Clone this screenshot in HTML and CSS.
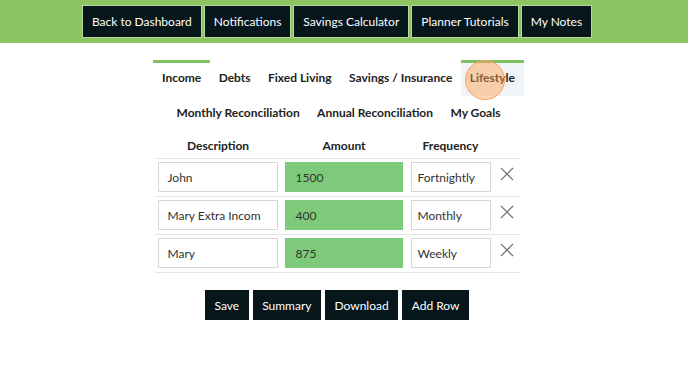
FILE: index.html
```html
<!DOCTYPE html>
<html>
<head>
<meta charset="utf-8">
<link rel="stylesheet" href="styles.css">
</head>
<body>
<header class="topbar">
  <nav class="topnav">
    <a class="navbtn">Back to Dashboard</a>
    <a class="navbtn">Notifications</a>
    <a class="navbtn">Savings Calculator</a>
    <a class="navbtn">Planner Tutorials</a>
    <a class="navbtn">My Notes</a>
  </nav>
</header>
<main class="main">
  <div class="tabs">
    <div class="tabrow">
      <span class="tab active">Income</span>
      <span class="tab">Debts</span>
      <span class="tab">Fixed Living</span>
      <span class="tab">Savings / Insurance</span>
      <span class="tab active hover">Lifestyle<span class="cursor"></span></span>
    </div>
    <div class="tabrow">
      <span class="tab">Monthly Reconciliation</span>
      <span class="tab">Annual Reconciliation</span>
      <span class="tab">My Goals</span>
    </div>
  </div>
  <table class="grid">
    <colgroup><col class="c-desc"><col class="c-amt"><col class="c-freq"><col class="c-x"></colgroup>
    <thead>
      <tr><th>Description</th><th>Amount</th><th>Frequency</th><th></th></tr>
    </thead>
    <tbody>
      <tr>
        <td class="t-desc"><div class="field desc">John</div></td>
        <td class="t-amt"><div class="field amt">1500</div></td>
        <td class="t-freq"><div class="field freq">Fortnightly</div></td>
        <td class="t-x"><svg class="xicon" viewBox="0 0 16 16"><path d="M1 1L15 15M15 1L1 15"/></svg></td>
      </tr>
      <tr>
        <td class="t-desc"><div class="field desc">Mary Extra Incom</div></td>
        <td class="t-amt"><div class="field amt">400</div></td>
        <td class="t-freq"><div class="field freq">Monthly</div></td>
        <td class="t-x"><svg class="xicon" viewBox="0 0 16 16"><path d="M1 1L15 15M15 1L1 15"/></svg></td>
      </tr>
      <tr>
        <td class="t-desc"><div class="field desc">Mary</div></td>
        <td class="t-amt"><div class="field amt">875</div></td>
        <td class="t-freq"><div class="field freq">Weekly</div></td>
        <td class="t-x"><svg class="xicon" viewBox="0 0 16 16"><path d="M1 1L15 15M15 1L1 15"/></svg></td>
      </tr>
    </tbody>
  </table>
  <div class="actions">
    <a class="btn">Save</a>
    <a class="btn">Summary</a>
    <a class="btn">Download</a>
    <a class="btn">Add Row</a>
  </div>
</main>
</body>
</html>
```
FILE: styles.css
```css
html, body { margin: 0; padding: 0; background: #fff; }
body { font-family: Lato, "Open Sans", Arial, sans-serif; color: #222; }
.topbar { background: #8cc462; height: 43px; display: flex; justify-content: center; padding-right: 14px; padding-top: 6px; box-sizing: border-box; }
.topnav { display: flex; gap: 4px; height: 31px; }
.navbtn { background: #06161b; color: #fff; font-size: 12px; display: flex; align-items: center; padding: 0 9px; box-shadow: 0 0 0 1px #b6d99b; }
.main { display: flex; flex-direction: column; align-items: center; padding-right: 14px; }
.tabs { margin-top: 17px; display: flex; flex-direction: column; align-items: center; margin-left: 3px; }
.tabrow { display: flex; }
.tab { position: relative; font-size: 12px; font-weight: bold; padding: 5px 8.7px 0; height: 28px; border-top: 3px solid transparent; box-sizing: content-box; line-height: 20px; }
.tabrow + .tabrow .tab { border-top: 0; padding-top: 7px; height: 26px; }
.tab.active { border-top-color: #7ec165; }
.tab.hover { background: #f1f4f7; }
.cursor { position: absolute; left: 4px; top: -3px; width: 38px; height: 38px; border-radius: 50%; background: rgba(255, 160, 80, 0.45); border: 1.5px solid #f4a460; }
.grid { border-collapse: collapse; margin-top: 3px; table-layout: fixed; width: 365px; }
.c-desc { width: 127px; }
.c-amt { width: 125px; }
.c-freq { width: 88px; }
.c-x { width: 25px; }
.grid th { font-size: 12px; font-weight: bold; height: 26px; padding: 0; text-align: center; }
.grid td { border-top: 1px solid #e2e6e9; padding: 3px 0 4px; vertical-align: top; }
.grid tbody tr:last-child td { border-bottom: 1px solid #e2e6e9; }
.t-desc { padding-left: 3px !important; }
.t-amt { padding-left: 3px !important; }
.t-freq { padding-left: 4px !important; }
.t-x { padding-left: 5px !important; }
.field { height: 30px; box-sizing: border-box; border: 1px solid #d7d7d7; font-size: 12px; color: #333; display: flex; align-items: center; padding-left: 9px; white-space: nowrap; overflow: hidden; }
.field.desc { width: 120px; }
.field.amt { width: 118px; background: #7dcb7a; border-color: #7dcb7a; padding-left: 10px; }
.field.freq { width: 80px; padding-left: 6px; }
.xicon { width: 14px; height: 14px; margin-top: 5px; stroke: #777; stroke-width: 1.6; fill: none; }
.actions { display: flex; gap: 4px; margin-top: 17px; }
.btn { background: #06161b; color: #fff; font-size: 12px; height: 30px; display: flex; align-items: center; padding: 0 9.5px; }
```
